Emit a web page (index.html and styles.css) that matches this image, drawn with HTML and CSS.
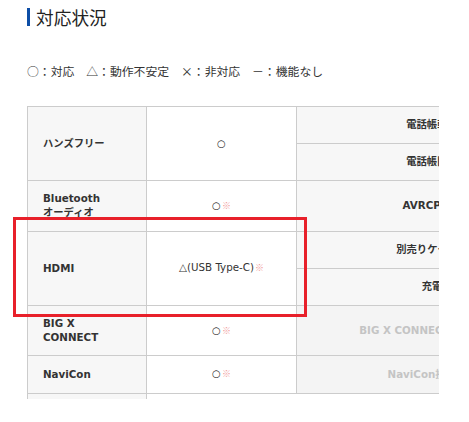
FILE: index.html
```html
<!DOCTYPE html>
<html lang="ja">
<head>
<meta charset="utf-8">
<title>対応状況</title>
<link rel="stylesheet" href="styles.css">
</head>
<body>
<div class="page">
  <h2 class="title">対応状況</h2>
  <p class="legend">○：対応　△：動作不安定　×：非対応　－：機能なし</p>
  <div class="table-wrap">
    <table class="compat">
      <tr>
        <th class="c1" rowspan="2">ハンズフリー</th>
        <td class="c2" rowspan="2">○</td>
        <th class="c3">電話帳転送</th>
      </tr>
      <tr>
        <th class="c3">電話帳閲覧</th>
      </tr>
      <tr>
        <th class="c1">Bluetooth<br>オーディオ</th>
        <td class="c2">○<span class="note">※</span></td>
        <th class="c3">AVRCP対応</th>
      </tr>
      <tr>
        <th class="c1" rowspan="2">HDMI</th>
        <td class="c2" rowspan="2">△(USB Type-C)<span class="note">※</span></td>
        <th class="c3">別売りケーブル</th>
      </tr>
      <tr>
        <th class="c3">充電</th>
      </tr>
      <tr class="row-tight">
        <th class="c1">BIG X CONNECT</th>
        <td class="c2">○<span class="note">※</span></td>
        <th class="c3 off">BIG X CONNECT 連携アプリ</th>
      </tr>
      <tr>
        <th class="c1">NaviCon</th>
        <td class="c2">○<span class="note">※</span></td>
        <th class="c3 off">NaviCon接続対応</th>
      </tr>
      <tr class="row-last">
        <th class="c1">Apple CarPlay</th>
        <td class="c2">－</td>
        <td class="empty"></td>
      </tr>
    </table>
  </div>
  <div class="highlight"></div>
</div>
</body>
</html>
```
FILE: styles.css
```css
* {
  box-sizing: border-box;
}

html, body {
  margin: 0;
  padding: 0;
  background: #fff;
}

.page {
  position: relative;
  width: 469px;
  height: 422px;
  padding: 8px 0 0 27px;
  color: #333;
  font-family: "Noto Sans CJK JP", "DejaVu Sans", sans-serif;
}

.title {
  margin: 0;
  border-left: 3px solid #0d4ea6;
  padding-left: 6px;
  font-size: 17.7px;
  line-height: 18px;
  font-weight: 400;
  color: #222;
}

.legend {
  margin: 37px 0 0;
  font-size: 11.85px;
  line-height: 16px;
  color: #333;
}

.table-wrap {
  margin-top: 27px;
  width: 412px;
  height: 293px;
  overflow: hidden;
}

.compat {
  table-layout: fixed;
  border-collapse: separate;
  border-spacing: 0;
  width: 541px;
  border-top: 1px solid #ccc;
  border-left: 1px solid #ccc;
  font-family: "DejaVu Sans", "Noto Sans CJK JP", sans-serif;
  font-size: 10.3px;
  line-height: 14px;
  color: #333;
}

.compat th,
.compat td {
  padding: 10px 0 12px;
  border-right: 1px solid #ccc;
  border-bottom: 1px solid #ccc;
  vertical-align: middle;
}

.compat th {
  font-weight: 700;
}

.compat .c1 {
  width: 119px;
  padding-left: 15px;
  padding-right: 20px;
  text-align: left;
  background: #f7f7f7;
}

.compat .c2 {
  width: 150px;
  text-align: center;
  background: #fff;
  font-weight: 400;
}

.compat .c3 {
  width: 271px;
  text-align: center;
  background: #f7f7f7;
  white-space: nowrap;
}

.compat .c3.off {
  background: #f4f4f4;
  color: #c4c4c4;
}

.compat .row-tight th,
.compat .row-tight td {
  padding-bottom: 11px;
}

.compat .row-last .c2 {
  border-right: none;
}

.compat .empty {
  border: none;
  background: #fff;
}

.note {
  color: #f19a9a;
  margin-left: 1px;
  font-family: "Noto Sans CJK JP", sans-serif;
  font-size: 9px;
}

.highlight {
  position: absolute;
  left: 13px;
  top: 217px;
  width: 294px;
  height: 100px;
  border: 3px solid #e8202a;
  pointer-events: none;
}
```
